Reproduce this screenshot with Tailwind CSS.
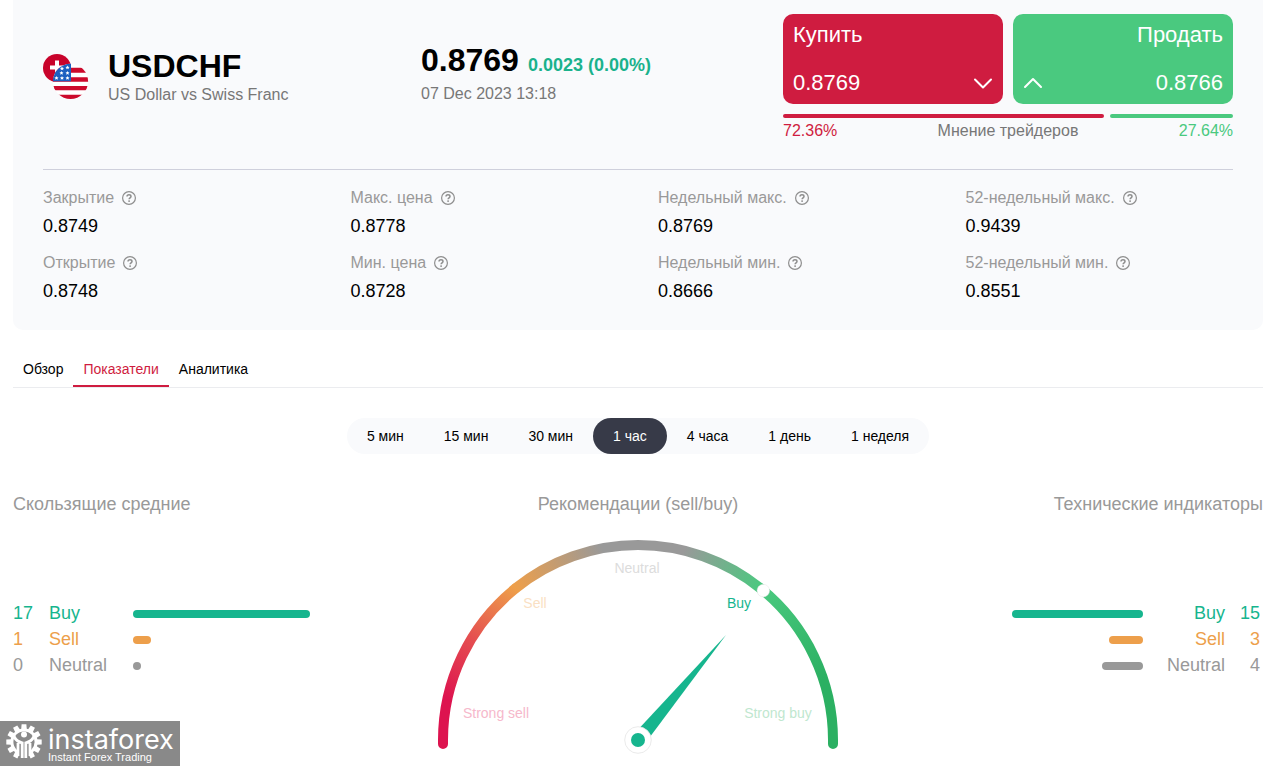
<!DOCTYPE html>
<html lang="ru">
<head>
<meta charset="utf-8">
<meta name="viewport" content="width=device-width, initial-scale=1">
<title>USDCHF</title>
<script src="https://cdn.jsdelivr.net/npm/@tailwindcss/browser@4"></script>
</head>
<body class="bg-white font-['Liberation_Sans',Arial,sans-serif] text-black overflow-x-hidden">
<svg class="hidden" aria-hidden="true">
  <symbol id="help" viewBox="0 0 14 14">
    <circle cx="7" cy="7" r="6.400" fill="none" stroke="#8e8e8e" stroke-width="1.200"/>
    <path d="M5 5.500C5 4.200 5.900 3.700 7 3.700s2 .6 2 1.700c0 1.400-1.900 1.400-1.900 2.900" fill="none" stroke="#8e8e8e" stroke-width="1.500"/>
    <circle cx="7.100" cy="10.100" r=".95" fill="#8e8e8e"/>
  </symbol>
</svg>

<main class="ml-[13px] mr-6">
  <section class="rounded-b-[10px] bg-[#f9fafc] px-[30px] pb-[27px]">
    <header class="flex border-b border-[#cfd0dc] pt-[14px] pb-[26px]">
      <div class="flex w-[378px] pt-9">
        <svg class="mt-[3px] mr-[19px] h-[47px] w-[46px] shrink-0" viewBox="43 53 46 47" aria-hidden="true">
          <defs><clipPath id="us"><circle cx="70.5" cy="81.4" r="17.6"/></clipPath></defs>
          <circle cx="57" cy="68" r="14" fill="#c8032b"/>
          <path d="M55 60.500h4v5h5v4h-5v5h-4v-5h-5v-4h5z" fill="#fff"/>
          <g clip-path="url(#us)">
            <path d="M52 63h38v37H52z" fill="#fff"/>
            <path d="M52 67.700h38v5H52zM52 77.300h38v4.500H52zM52 86h38v4.300H52zM52 94.700h38v5H52z" fill="#cc0a2c"/>
            <path d="M52 63h19v18.300H52z" fill="#1c5fc0"/>
            <g fill="#fff">
              <path id="star" d="M67.500 65.500l.6 1.300 1.400.1-1 1 .3 1.400-1.300-.7-1.300.7.3-1.400-1-1 1.400-.1z"/>
              <use href="#star" x="-5.500" y="1"/><use href="#star" y="5.400"/><use href="#star" x="-6" y="5.400"/>
              <use href="#star" y="10.500"/><use href="#star" x="-5.500" y="10.500"/><use href="#star" x="-11" y="10.500"/>
            </g>
          </g>
        </svg>
        <div>
          <h1 class="text-[32px] leading-8 font-bold">USDCHF</h1>
          <p class="mt-px text-base leading-6 text-[#777]">US Dollar vs Swiss Franc</p>
        </div>
      </div>
      <div class="flex-1 pt-[30px]">
        <p class="flex h-8 items-baseline gap-[9px] text-[32px] leading-8 font-bold whitespace-nowrap">0.8769 <span class="text-lg leading-6 text-[#1bb28c]">0.0023 (0.00%)</span></p>
        <p class="mt-1.5 text-base leading-6 text-[#777]">07 Dec 2023 13:18</p>
      </div>
      <div class="w-[450px]">
        <div class="grid grid-cols-2 gap-2.5 text-[22px] leading-6 text-white">
          <button type="button" class="flex h-[90px] flex-col items-start justify-between rounded-[10px] bg-[#cf1c40] px-2.5 py-[9px]">
            <span>Купить</span>
            <span class="flex w-full items-center justify-between">0.8769
              <svg class="h-3 w-5" viewBox="0 0 20 12" fill="none" stroke="#fff" stroke-width="2" stroke-linecap="round" stroke-linejoin="round"><path d="M2 2.500l8 8 8-8"/></svg>
            </span>
          </button>
          <button type="button" class="flex h-[90px] flex-col items-end justify-between rounded-[10px] bg-[#4ac97f] px-2.5 py-[9px]">
            <span>Продать</span>
            <span class="flex w-full items-center justify-between">
              <svg class="h-3 w-5" viewBox="0 0 20 12" fill="none" stroke="#fff" stroke-width="2" stroke-linecap="round" stroke-linejoin="round"><path d="M2 10l8-8 8 8"/></svg>
              0.8766</span>
          </button>
        </div>
        <div class="mt-2.5 flex gap-1.5">
          <div class="h-1 rounded-full bg-[#cf1c40]" style="width:72.36%"></div>
          <div class="h-1 rounded-full bg-[#4ac97f]" style="width:27.64%"></div>
        </div>
        <div class="mt-px flex justify-between text-base leading-6">
          <span class="text-[#cf1c40]">72.36%</span><span class="text-[#777]">Мнение трейдеров</span><span class="text-[#4ac97f]">27.64%</span>
        </div>
      </div>
    </header>

    <dl class="grid grid-cols-4 gap-x-10 gap-y-[13px] pt-4 text-lg leading-6">
      <div><dt class="flex items-center gap-2 text-base leading-6 text-[#999]">Закрытие <svg class="size-3.5"><use href="#help"/></svg></dt><dd class="mt-1">0.8749</dd></div>
      <div><dt class="flex items-center gap-2 text-base leading-6 text-[#999]">Макс. цена <svg class="size-3.5"><use href="#help"/></svg></dt><dd class="mt-1">0.8778</dd></div>
      <div><dt class="flex items-center gap-2 text-base leading-6 text-[#999]">Недельный макс. <svg class="size-3.5"><use href="#help"/></svg></dt><dd class="mt-1">0.8769</dd></div>
      <div><dt class="flex items-center gap-2 text-base leading-6 text-[#999]">52-недельный макс. <svg class="size-3.5"><use href="#help"/></svg></dt><dd class="mt-1">0.9439</dd></div>
      <div><dt class="flex items-center gap-2 text-base leading-6 text-[#999]">Открытие <svg class="size-3.5"><use href="#help"/></svg></dt><dd class="mt-1">0.8748</dd></div>
      <div><dt class="flex items-center gap-2 text-base leading-6 text-[#999]">Мин. цена <svg class="size-3.5"><use href="#help"/></svg></dt><dd class="mt-1">0.8728</dd></div>
      <div><dt class="flex items-center gap-2 text-base leading-6 text-[#999]">Недельный мин. <svg class="size-3.5"><use href="#help"/></svg></dt><dd class="mt-1">0.8666</dd></div>
      <div><dt class="flex items-center gap-2 text-base leading-6 text-[#999]">52-недельный мин. <svg class="size-3.5"><use href="#help"/></svg></dt><dd class="mt-1">0.8551</dd></div>
    </dl>
  </section>

  <nav class="mt-6 flex border-b border-[#ebecef] text-sm leading-5">
    <a href="#overview" class="border-b-2 border-transparent px-2.5 pt-[5px] pb-1.5">Обзор</a>
    <a href="#indicators" class="border-b-2 border-[#cf1c40] px-2.5 pt-[5px] pb-1.5 text-[#cf1c40]">Показатели</a>
    <a href="#analytics" class="border-b-2 border-transparent px-2.5 pt-[5px] pb-1.5">Аналитика</a>
  </nav>

  <div class="mx-auto mt-[30px] flex h-9 w-fit rounded-full bg-[#f9fafc] text-sm">
    <button type="button" class="rounded-full px-5">5 мин</button>
    <button type="button" class="rounded-full px-5">15 мин</button>
    <button type="button" class="rounded-full px-5">30 мин</button>
    <button type="button" class="rounded-full bg-[#373a48] px-5 text-white">1 час</button>
    <button type="button" class="rounded-full px-5">4 часа</button>
    <button type="button" class="rounded-full px-5">1 день</button>
    <button type="button" class="rounded-full px-5">1 неделя</button>
  </div>

  <div class="mt-9 grid grid-cols-[1fr_auto_1fr] text-lg text-[#999]">
    <section>
      <h2 class="leading-7">Скользящие средние</h2>
      <ul class="mt-[82px] leading-[26px]">
        <li class="flex items-center text-[#16b58e]"><span class="w-9">17</span><span class="w-[84px]">Buy</span><span class="mt-0.5 h-2 rounded-full bg-[#16b58e]" style="width:177px"></span></li>
        <li class="flex items-center text-[#ed9f4b]"><span class="w-9">1</span><span class="w-[84px]">Sell</span><span class="mt-0.5 h-2 rounded-full bg-[#ed9f4b]" style="width:18px"></span></li>
        <li class="flex items-center"><span class="w-9">0</span><span class="w-[84px]">Neutral</span><span class="mt-0.5 h-2 rounded-full bg-[#999]" style="width:8px"></span></li>
      </ul>
    </section>

    <section>
      <h2 class="text-center leading-7">Рекомендации (sell/buy)</h2>
      <svg class="mt-[22px] h-[216px] w-[400px]" viewBox="438 540 400 216" fill="none" role="img" aria-label="Buy">
        <defs>
          <linearGradient id="g1" gradientUnits="userSpaceOnUse" x1="447" y1="699" x2="515" y2="588"><stop stop-color="#dd134f"/><stop offset=".5" stop-color="#e54f50"/><stop offset="1" stop-color="#ee9f4a"/></linearGradient>
          <linearGradient id="g2" gradientUnits="userSpaceOnUse" x1="515" y1="588" x2="602" y2="548"><stop stop-color="#ee9f4a"/><stop offset="1" stop-color="#999"/></linearGradient>
          <linearGradient id="g3" gradientUnits="userSpaceOnUse" x1="684" y1="550" x2="761" y2="588"><stop stop-color="#999"/><stop offset="1" stop-color="#4ac97f"/></linearGradient>
          <linearGradient id="g4" gradientUnits="userSpaceOnUse" x1="761" y1="588" x2="822" y2="680"><stop stop-color="#4ac97f"/><stop offset="1" stop-color="#2bb062"/></linearGradient>
        </defs>
        <g stroke-width="10" stroke-linecap="round">
          <path d="M443 744V740A195 195 0 0 1 515.300 588.500" stroke="url(#g1)"/>
          <path d="M833 744V740A195 195 0 0 0 760.700 588.500" stroke="url(#g4)"/>
        </g>
        <g stroke-width="10">
          <path d="M515.300 588.500A195 195 0 0 1 638 545" stroke="url(#g2)"/>
          <path d="M637.500 545H638A195 195 0 0 1 760.700 588.500" stroke="url(#g3)"/>
        </g>
        <circle cx="763.300" cy="590.600" r="6.300" fill="#fff" stroke="#ddd" stroke-width=".4"/>
        <path d="M726 635L633 735L644.700 744Z" fill="#16b58e"/>
        <circle cx="638" cy="740" r="13.300" fill="#fff" stroke="#e4e4e4" stroke-width=".8"/>
        <circle cx="638" cy="740" r="7" fill="#16b58e"/>
        <g class="text-sm" text-anchor="middle">
          <text x="637" y="573" fill="#dcdcdc">Neutral</text>
          <text x="535" y="608" fill="#fadfc3">Sell</text>
          <text x="739" y="608" fill="#16b58e">Buy</text>
          <text x="496" y="718" fill="#f6b8cb">Strong sell</text>
          <text x="778" y="718" fill="#bfe7cf">Strong buy</text>
        </g>
      </svg>
    </section>

    <section class="text-right">
      <h2 class="leading-7">Технические индикаторы</h2>
      <ul class="mt-[82px] pr-[3px] leading-[26px]">
        <li class="flex items-center justify-end text-[#16b58e]"><span class="mt-0.5 h-2 rounded-full bg-[#16b58e]" style="width:131px"></span><span class="w-[82px]">Buy</span><span class="w-[35px]">15</span></li>
        <li class="flex items-center justify-end text-[#ed9f4b]"><span class="mt-0.5 h-2 rounded-full bg-[#ed9f4b]" style="width:34px"></span><span class="w-[82px]">Sell</span><span class="w-[35px]">3</span></li>
        <li class="flex items-center justify-end"><span class="mt-0.5 h-2 rounded-full bg-[#999]" style="width:41px"></span><span class="w-[82px]">Neutral</span><span class="w-[35px]">4</span></li>
      </ul>
    </section>
  </div>
</main>

<aside class="fixed bottom-0 left-0 flex h-[45px] w-[180px] bg-[#898989] pl-1.5 text-white">
  <svg class="mt-[3px] size-9 shrink-0" viewBox="-18 -18 36 36" aria-hidden="true">
    <g fill="#fff">
      <path id="tooth" d="M-2.400-17.700h4.800l.4 5.500h-5.600z"/>
      <use href="#tooth" transform="rotate(30)"/><use href="#tooth" transform="rotate(60)"/><use href="#tooth" transform="rotate(90)"/>
      <use href="#tooth" transform="rotate(120)"/><use href="#tooth" transform="rotate(150)"/><use href="#tooth" transform="rotate(210)"/>
      <use href="#tooth" transform="rotate(240)"/><use href="#tooth" transform="rotate(270)"/><use href="#tooth" transform="rotate(300)"/><use href="#tooth" transform="rotate(330)"/>
      <circle r="13.600"/>
    </g>
    <circle r="10.600" fill="#898989"/>
    <path d="M-5.500 0h11v19h-11z" fill="#898989"/>
    <circle cy="-7.500" r="3" fill="#fff"/>
    <path d="M-10-5.500C-8-1.500-5 .2-1.800.8V16M10-5.500C8-1.500 5 .2 1.800.8V16M-6 1v13M6 1v13" fill="none" stroke="#fff" stroke-width="2.800"/>
  </svg>
  <div class="ml-1.5 flex flex-col justify-end pb-[3px] whitespace-nowrap">
    <p class="font-['Inter',sans-serif] text-[27px] leading-6">instaforex</p>
    <p class="text-[11px] leading-[11px]">Instant Forex Trading</p>
  </div>
</aside>
</body>
</html>
